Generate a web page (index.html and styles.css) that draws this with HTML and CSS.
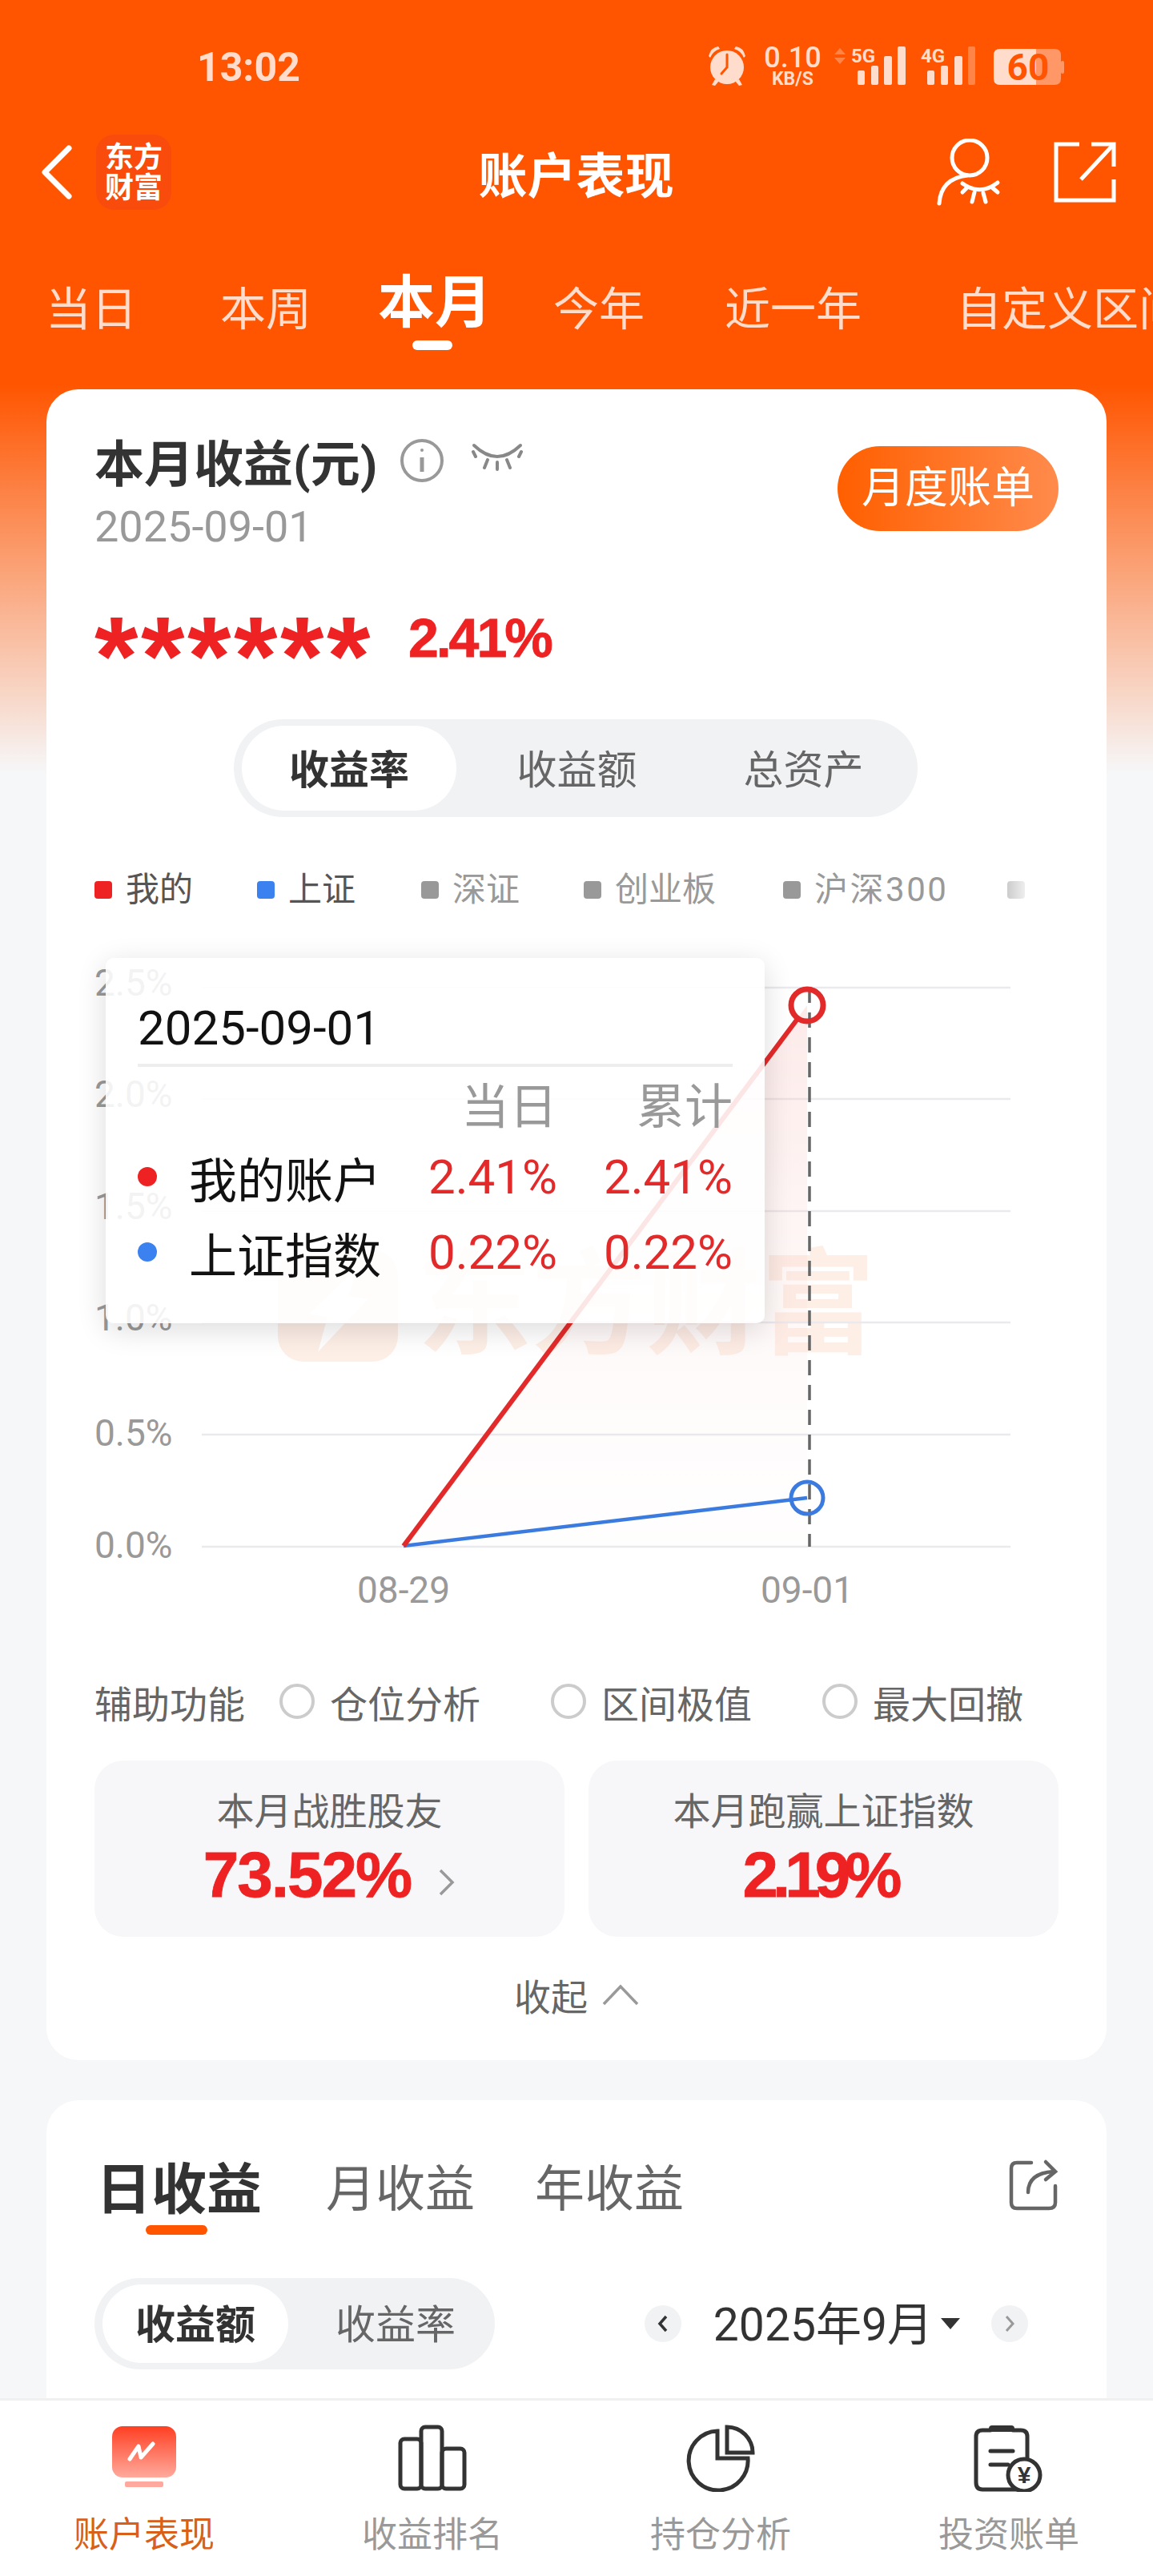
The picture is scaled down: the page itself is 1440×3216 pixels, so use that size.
FILE: index.html
```html
<!DOCTYPE html>
<html lang="zh-CN">
<head>
  <meta charset="UTF-8">
  <title>账户表现</title>
  <link rel="stylesheet" href="styles.css">
</head>
<body>
  <div class="phone">
    <div class="status-bar">
      <span class="clock">13:02</span>
      <svg class="status-icons" viewBox="880 50 460 64" width="460" height="64">
        <g fill="#ffdccb">
          <circle cx="908" cy="84" r="21"/>
          <path d="M885 70 Q888 59 897 58 L899 61 Q890 64 887 72Z M931 70 Q928 59 919 58 L917 61 Q926 64 929 72Z"/>
          <path d="M893 99 L889 106 L893 107 L898 101Z M923 99 L927 106 L923 107 L918 101Z"/>
          <text class="sb-num" x="990" y="84" text-anchor="middle">0.10</text>
          <text class="sb-unit" x="990" y="106" text-anchor="middle">KB/S</text>
          <text class="sb-net" x="1063" y="78">5G</text>
          <rect x="1071" y="88" width="9" height="18" rx="2"/>
          <rect x="1088" y="82" width="9" height="24" rx="2"/>
          <rect x="1104" y="70" width="10" height="36" rx="2"/>
          <rect x="1121" y="58" width="10" height="48" rx="2"/>
          <text class="sb-net" x="1150" y="78">4G</text>
          <rect x="1158" y="88" width="9" height="18" rx="2"/>
          <rect x="1175" y="82" width="9" height="24" rx="2"/>
          <rect x="1192" y="70" width="10" height="36" rx="2"/>
          <rect x="1209" y="58" width="9" height="48" rx="2" opacity=".35"/>
          <path d="M1049 60 L1056 68 H1042Z M1049 80 L1056 72 H1042Z" opacity=".35"/>
          <path d="M1249 61 H1294 V106 H1249 Q1241 106 1241 98 V69 Q1241 61 1249 61Z"/>
          <path d="M1294 61 H1317 Q1325 61 1325 69 V98 Q1325 106 1317 106 H1294Z" opacity=".5"/>
          <rect x="1325" y="76" width="4" height="16" rx="2" opacity=".5"/>
        </g>
        <path d="M908 68 V84 L901 92" fill="none" stroke="#ff5500" stroke-width="3" stroke-linecap="round"/>
        <text class="sb-batt" x="1284" y="100" text-anchor="middle">60</text>
      </svg>
    </div>

    <header class="topbar">
      <div class="topbar-left">
        <svg width="42" height="70" viewBox="0 0 42 70">
          <path d="M36 5 L6 35 L36 65" fill="none" stroke="#fff" stroke-width="7" stroke-linecap="round" stroke-linejoin="round"/>
        </svg>
        <div class="app-logo">东方<br>财富</div>
      </div>
      <h1 class="page-title">账户表现</h1>
      <div class="topbar-right">
        <svg width="80" height="84" viewBox="0 0 80 84" fill="none" stroke="#fff" stroke-width="5" stroke-linecap="round">
          <circle cx="41" cy="24" r="22"/>
          <path d="M3 81 Q5 50 38 46"/>
          <path d="M32 56 Q54 72 76 55"/>
          <path d="M38 61 L32 67 M47 67 L44 79 M58 68 L61 79 M69 61 L76 67"/>
        </svg>
        <svg width="78" height="78" viewBox="0 0 78 78" fill="none" stroke="#fff" stroke-width="5">
          <path d="M32 4 H3 V74 H75 V48"/>
          <path d="M47 4 H75 V32"/>
          <path d="M75 4 L34 48"/>
        </svg>
      </div>
    </header>

    <nav class="period-tabs">
      <span class="period-tab">当日</span>
      <span class="period-tab">本周</span>
      <span class="period-tab is-active">本月</span>
      <span class="period-tab">今年</span>
      <span class="period-tab">近一年</span>
      <span class="period-tab">自定义区间</span>
    </nav>

    <main class="content">
      <section class="card summary-card">
        <div class="summary-head">
          <div>
            <div class="summary-title">
              <span>本月收益(元)</span>
              <svg class="info-icon" width="56" height="56" viewBox="0 0 56 56" fill="none" stroke="#999" stroke-width="4">
                <circle cx="28" cy="28" r="25"/>
                <path d="M28 24 V42" stroke-width="5"/>
                <circle cx="28" cy="15" r="2" fill="#999" stroke="none"/>
              </svg>
              <svg class="eye-icon" width="64" height="40" viewBox="0 0 64 40" fill="none" stroke="#888" stroke-width="4" stroke-linecap="round">
                <path d="M3 6 Q32 34 61 6"/>
                <path d="M5 20 L2 14 M20 24 L16 34 M44 24 L48 34 M59 20 L62 14 M32 27 V36"/>
              </svg>
            </div>
            <div class="summary-date">2025-09-01</div>
          </div>
          <div class="bill-btn">月度账单</div>
        </div>

        <div class="amount-row">
          <span class="amount-mask">******</span>
          <span class="amount-rate">2.41%</span>
        </div>

        <div class="segment segment-wide">
          <span class="segment-item is-active">收益率</span>
          <span class="segment-item">收益额</span>
          <span class="segment-item">总资产</span>
        </div>

        <div class="legend">
          <span class="legend-item"><i class="sq red"></i>我的</span>
          <span class="legend-item"><i class="sq blue"></i>上证</span>
          <span class="legend-item muted"><i class="sq"></i>深证</span>
          <span class="legend-item muted"><i class="sq"></i>创业板</span>
          <span class="legend-item muted"><i class="sq"></i>沪深300</span>
          <span class="legend-item muted"><i class="sq fade"></i></span>
        </div>

        <div class="chart">
          <div class="watermark">
            <svg width="150" height="140" viewBox="0 0 150 140">
              <rect width="150" height="140" rx="32" fill="#fdeee6"/>
              <path d="M100 22 L40 80 L62 84 L50 128 L112 62 L88 58Z" fill="#fff"/>
            </svg>
            <span>东方财富</span>
          </div>
          <svg class="chart-svg" viewBox="118 1170 1204 860" width="1204" height="860">
            <defs>
              <linearGradient id="areaFill" x1="0" y1="0" x2="0" y2="1">
                <stop offset="0" stop-color="#f6b9b4" stop-opacity=".3"/>
                <stop offset="1" stop-color="#fde9e6" stop-opacity=".04"/>
              </linearGradient>
            </defs>
            <g stroke="#e9e9ee" stroke-width="2.5">
              <path d="M252 1233 H1262"/>
              <path d="M252 1372 H1262"/>
              <path d="M252 1512 H1262"/>
              <path d="M252 1651 H1262"/>
              <path d="M252 1791 H1262"/>
              <path d="M252 1931 H1262"/>
            </g>
            <g class="axis-label">
              <text x="118" y="1243">2.5%</text>
              <text x="118" y="1382">2.0%</text>
              <text x="118" y="1522">1.5%</text>
              <text x="118" y="1661">1.0%</text>
              <text x="118" y="1805">0.5%</text>
              <text x="118" y="1945">0.0%</text>
              <text x="504" y="2001" text-anchor="middle">08-29</text>
              <text x="1008" y="2001" text-anchor="middle">09-01</text>
            </g>
            <path d="M504 1930 L1008 1255 V1930Z" fill="url(#areaFill)"/>
            <path d="M1011 1233 V1931" stroke="#666" stroke-width="3.5" stroke-dasharray="19 12"/>
            <path d="M504 1930 L1008 1870" stroke="#3b7be0" stroke-width="4.5" fill="none"/>
            <path d="M504 1930 L996 1272" stroke="#e32a2a" stroke-width="6" fill="none"/>
            <circle cx="1008" cy="1255" r="20" fill="none" stroke="#e32a2a" stroke-width="7"/>
            <circle cx="1008" cy="1870" r="20" fill="none" stroke="#3b7be0" stroke-width="5"/>
          </svg>
          <div class="chart-tip">
            <div class="tip-date">2025-09-01</div>
            <div class="tip-row tip-head">
              <span class="tip-name"></span><span class="tip-val">当日</span><span class="tip-val">累计</span>
            </div>
            <div class="tip-row">
              <i class="dot red"></i><span class="tip-name">我的账户</span><span class="tip-val up">2.41%</span><span class="tip-val up">2.41%</span>
            </div>
            <div class="tip-row">
              <i class="dot blue"></i><span class="tip-name">上证指数</span><span class="tip-val up">0.22%</span><span class="tip-val up">0.22%</span>
            </div>
          </div>
        </div>

        <div class="assist-row">
          <span class="assist-label">辅助功能</span>
          <span class="radio"><i></i>仓位分析</span>
          <span class="radio"><i></i>区间极值</span>
          <span class="radio"><i></i>最大回撤</span>
        </div>

        <div class="stats">
          <div class="stat-box">
            <div class="stat-label">本月战胜股友</div>
            <div class="stat-value">73.52%
              <svg class="stat-arrow" width="22" height="36" viewBox="0 0 22 36" fill="none" stroke="#999" stroke-width="3.5">
                <path d="M3 3 L18 18 L3 33"/>
              </svg>
            </div>
          </div>
          <div class="stat-box">
            <div class="stat-label">本月跑赢上证指数</div>
            <div class="stat-value tight">2.19%</div>
          </div>
        </div>

        <div class="collapse-row">
          <span>收起</span>
          <svg width="46" height="28" viewBox="0 0 46 28" fill="none" stroke="#999" stroke-width="3.5">
            <path d="M2 26 L23 4 L44 26"/>
          </svg>
        </div>
      </section>

      <section class="card income-card">
        <div class="income-head">
          <span class="income-tab is-active">日收益</span>
          <span class="income-tab">月收益</span>
          <span class="income-tab">年收益</span>
          <svg class="income-share" width="62" height="66" viewBox="0 0 62 66" fill="none" stroke="#666" stroke-width="4.5" stroke-linecap="round">
            <path d="M28 5 H10 Q3 5 3 12 V55 Q3 62 10 62 H50 Q58 62 58 55 V34"/>
            <path d="M24 42 Q24 18 56 16"/>
            <path d="M46 4 L58 16 L46 26"/>
          </svg>
        </div>
        <div class="income-tools">
          <div class="segment segment-small">
            <span class="segment-item is-active">收益额</span>
            <span class="segment-item">收益率</span>
          </div>
          <div class="month-picker">
            <span class="month-nav">
              <svg width="14" height="24" viewBox="0 0 14 24" fill="none" stroke="#333" stroke-width="3.5"><path d="M11 3 L3 12 L11 21"/></svg>
            </span>
            <span class="month-text">2025年9月</span>
            <i class="caret"></i>
            <span class="month-nav">
              <svg width="14" height="24" viewBox="0 0 14 24" fill="none" stroke="#999" stroke-width="3"><path d="M3 3 L11 12 L3 21"/></svg>
            </span>
          </div>
        </div>
      </section>
    </main>

    <footer class="bottom-nav">
      <div class="nav-item is-active">
        <svg width="90" height="84" viewBox="0 0 90 84">
          <defs>
            <linearGradient id="navFill" x1="0" y1="0" x2="0" y2="1">
              <stop offset="0" stop-color="#ff3f22"/>
              <stop offset="1" stop-color="#ffaa9c"/>
            </linearGradient>
          </defs>
          <rect x="5" y="2" width="80" height="64" rx="13" fill="url(#navFill)"/>
          <rect x="21" y="71" width="48" height="7" rx="2" fill="#ffa99e"/>
          <path d="M27 43 L38 27 L41 41 L56 24" fill="none" stroke="#fff" stroke-width="5" stroke-linecap="round" stroke-linejoin="round"/>
        </svg>
        <span>账户表现</span>
      </div>
      <div class="nav-item">
        <svg width="90" height="84" viewBox="0 0 90 84" fill="none" stroke="#333" stroke-width="5" stroke-linejoin="round">
          <rect x="5" y="18" width="26" height="62" rx="5"/>
          <rect x="31" y="3" width="26" height="77" rx="5"/>
          <rect x="57" y="30" width="28" height="50" rx="5"/>
        </svg>
        <span>收益排名</span>
      </div>
      <div class="nav-item">
        <svg width="90" height="84" viewBox="0 0 90 84" fill="none" stroke="#333" stroke-width="5">
          <path d="M41 8 A37 37 0 1 0 79 42 H41Z"/>
          <path d="M53 3 A32 32 0 0 1 85 35 H53Z"/>
        </svg>
        <span>持仓分析</span>
      </div>
      <div class="nav-item">
        <svg width="90" height="84" viewBox="0 0 90 84" fill="none" stroke="#333" stroke-width="5" stroke-linecap="round">
          <path d="M22 7 H12 Q4 7 4 15 V72 Q4 81 12 81 H62"/>
          <path d="M50 7 H60 Q68 7 68 15 V42"/>
          <path d="M24 5 H48" stroke-width="8"/>
          <path d="M22 33 H50 M22 50 H44"/>
          <circle cx="64" cy="63" r="20" fill="#fff"/>
          <text class="nav-yen" x="64" y="73" text-anchor="middle">¥</text>
        </svg>
        <span>投资账单</span>
      </div>
    </footer>
  </div>
</body>
</html>
```

FILE: styles.css
```css
* {
  box-sizing: border-box;
}

html,
body {
  margin: 0;
  padding: 0;
}

body {
  font-family: Roboto, "Noto Sans CJK SC", sans-serif;
  color: #333;
}

.phone {
  display: flex;
  flex-direction: column;
  width: 1440px;
  height: 3216px;
  overflow: hidden;
  background: linear-gradient(#ff5500 480px, #f6f7f9 965px);
}

/* status bar */
.status-bar {
  display: flex;
  justify-content: space-between;
  align-items: flex-start;
  flex: none;
  height: 130px;
  padding: 50px 100px 0 246px;
}

.clock {
  margin-top: 4px;
  font-size: 50px;
  line-height: 60px;
  font-weight: 700;
  color: #ffdccb;
}

.sb-num {
  font: 500 36px Roboto, sans-serif;
}

.sb-unit {
  font: 700 23px Roboto, sans-serif;
}

.sb-net {
  font: 700 24px Roboto, sans-serif;
}

.sb-batt {
  font: 700 46px Roboto, sans-serif;
  fill: #ff5500;
}

/* title bar */
.topbar {
  display: grid;
  grid-template-columns: 1fr auto 1fr;
  align-items: center;
  flex: none;
  height: 170px;
  padding: 0 46px 0 50px;
}

.topbar-left {
  display: flex;
  align-items: center;
  gap: 28px;
}

.app-logo {
  width: 94px;
  height: 94px;
  padding-top: 10px;
  border-radius: 22px;
  background: #f94c0c;
  color: #fff;
  font-size: 36px;
  line-height: 38px;
  font-weight: 700;
  text-align: center;
}

.page-title {
  margin: 0 0 0 -5px;
  font-size: 61px;
  font-weight: 700;
  color: #fff;
}

.topbar-right {
  display: flex;
  justify-content: flex-end;
  align-items: center;
  gap: 66px;
}

/* period tabs */
.period-tabs {
  display: flex;
  align-items: center;
  flex: none;
  height: 186px;
  padding: 0 0 24px 57px;
  overflow: hidden;
  white-space: nowrap;
}

.period-tab {
  position: relative;
  flex: none;
  margin-right: 83px;
  font-size: 57px;
  color: #ffdccb;
}

.period-tab:nth-child(1) {
  margin-right: 104px;
}

.period-tab:nth-child(3) {
  margin-right: 77px;
}

.period-tab:nth-child(4) {
  margin-right: 100px;
}

.period-tab:nth-child(5) {
  margin-right: 118px;
}

.period-tab.is-active {
  margin-bottom: 6px;
  font-size: 71px;
  line-height: 84px;
  font-weight: 700;
  color: #fff;
}

.period-tab.is-active::after {
  content: "";
  position: absolute;
  left: 43px;
  bottom: -17px;
  width: 50px;
  height: 12px;
  border-radius: 6px;
  background: #fff;
}

/* page body */
.content {
  flex: 1;
  min-height: 0;
  overflow: hidden;
  padding: 0 58px;
}

.card {
  border-radius: 40px;
  background: #fff;
}

.summary-card {
  padding: 60px 60px 52px;
}

.summary-head {
  display: flex;
  justify-content: space-between;
  align-items: flex-start;
}

.summary-title {
  display: flex;
  align-items: center;
  height: 70px;
  margin-top: -6px;
  font-size: 62px;
  font-weight: 700;
}

.info-icon {
  margin-left: 28px;
}

.eye-icon {
  margin: -10px 0 0 34px;
}

.summary-date {
  margin-top: 18px;
  font-size: 54px;
  line-height: 60px;
  color: #999;
}

.bill-btn {
  width: 276px;
  height: 106px;
  margin-top: 11px;
  border-radius: 53px;
  background: linear-gradient(90deg, #ff5f00, #ff8b4c);
  color: #fff;
  font-size: 54px;
  line-height: 106px;
  text-align: center;
}

.amount-row {
  display: flex;
  align-items: flex-start;
  height: 90px;
  margin-top: 62px;
  color: #ee2222;
}

.amount-mask {
  margin-top: -4px;
  font: 700 140px/146px "Liberation Sans", sans-serif;
  letter-spacing: 3.5px;
}

.amount-rate {
  margin: 8px 0 0 44px;
  font: 700 68px/76px "Liberation Sans", sans-serif;
  letter-spacing: -3px;
  -webkit-text-stroke: 0.8px #ee2222;
}

.segment {
  display: flex;
  padding: 8px 10px;
  background: #f1f2f4;
}

.segment-item {
  flex: 1;
  text-align: center;
  color: #666;
}

.segment-item.is-active {
  flex: none;
  background: #fff;
  color: #333;
  font-weight: 700;
}

.segment-wide {
  width: 854px;
  height: 122px;
  margin: 58px 0 0 174px;
  border-radius: 61px;
}

.segment-wide .segment-item {
  padding-left: 18px;
  font-size: 50px;
  line-height: 112px;
  border-radius: 53px;
}

.segment-wide .segment-item.is-active {
  width: 268px;
  padding-left: 0;
}

.legend {
  display: flex;
  height: 44px;
  margin-top: 69px;
  white-space: nowrap;
}

.legend-item {
  display: flex;
  align-items: center;
  flex: none;
  margin-right: 80px;
  font-size: 42px;
  line-height: 44px;
  color: #555;
}

.legend-item:nth-child(2) {
  margin-right: 82px;
}

.legend-item:nth-child(4) {
  margin-right: 84px;
}

.legend-item:nth-child(5) {
  margin-right: 74px;
  letter-spacing: 2.5px;
}

.legend-item.muted {
  color: #999;
}

.sq {
  flex: none;
  width: 22px;
  height: 22px;
  margin-right: 17px;
  border-radius: 4px;
  background: #999;
}

.sq.red,
.dot.red {
  background: #ee2222;
}

.sq.blue,
.dot.blue {
  background: #3b82f0;
}

.sq.fade {
  background: linear-gradient(90deg, #ccc, #eee);
}

/* chart */
.chart {
  position: relative;
  height: 860px;
  margin-top: 37px;
}

.chart-svg {
  position: absolute;
  left: 0;
  top: 0;
}

.axis-label text {
  font: 46px Roboto, sans-serif;
  fill: #999;
}

.watermark {
  position: absolute;
  left: 229px;
  top: 390px;
  display: flex;
  align-items: center;
  gap: 24px;
  font-size: 143px;
  line-height: 140px;
  font-weight: 700;
  color: #fdeee6;
  white-space: nowrap;
}

.chart-tip {
  position: absolute;
  left: 14px;
  top: 26px;
  width: 823px;
  height: 456px;
  padding: 50px 40px 0;
  border-radius: 10px;
  background: rgba(255, 255, 255, 0.88);
  box-shadow: 0 8px 36px rgba(0, 0, 0, 0.14);
}

.tip-date {
  height: 86px;
  border-bottom: 4px solid #eee;
  font-size: 60px;
  line-height: 76px;
  color: #111;
}

.tip-row {
  display: flex;
  align-items: center;
  height: 94px;
  font-size: 60px;
}

.tip-head {
  height: 88px;
  margin-bottom: 2px;
  color: #999;
}

.tip-name {
  flex: 1;
  min-width: 0;
  font-size: 60px;
  color: #111;
  white-space: nowrap;
}

.tip-val {
  flex: none;
  width: 219px;
  text-align: right;
}

.tip-val.up {
  color: #e32a2a;
}

.dot {
  flex: none;
  width: 24px;
  height: 24px;
  margin-right: 40px;
  border-radius: 50%;
}

/* assist options */
.assist-row {
  display: flex;
  align-items: center;
  height: 60px;
  margin-top: 64px;
  font-size: 47px;
  color: #666;
}

.assist-label {
  flex: none;
  width: 231px;
}

.radio {
  display: flex;
  align-items: center;
  flex: none;
  width: 339px;
}

.radio i {
  flex: none;
  width: 44px;
  height: 44px;
  margin-right: 19px;
  border: 4px solid #ccc;
  border-radius: 50%;
}

.stats {
  display: grid;
  grid-template-columns: 1fr 1fr;
  gap: 30px;
  margin-top: 44px;
}

.stat-box {
  height: 220px;
  padding-top: 36px;
  border-radius: 36px;
  background: #f7f7fa;
  text-align: center;
}

.stat-label {
  font-size: 47px;
  line-height: 56px;
  color: #666;
}

.stat-value {
  margin-top: 6px;
  font: 700 80px/90px "Liberation Sans", sans-serif;
  letter-spacing: -2px;
  color: #ee2222;
  -webkit-text-stroke: 0.8px #ee2222;
}

.stat-value.tight {
  padding-right: 10px;
  letter-spacing: -7px;
}

.stat-arrow {
  margin-left: 14px;
}

.collapse-row {
  display: flex;
  justify-content: center;
  align-items: center;
  gap: 18px;
  height: 60px;
  margin-top: 42px;
  font-size: 46px;
  color: #666;
}

/* income card */
.income-card {
  margin-top: 50px;
  padding: 61px 60px 80px 62px;
}

.income-head {
  display: flex;
  align-items: center;
  height: 90px;
  gap: 80px;
}

.income-tab {
  position: relative;
  font-size: 62px;
  color: #666;
}

.income-tab:nth-child(2) {
  margin-right: -5px;
}

.income-tab.is-active {
  font-size: 69px;
  font-weight: 700;
  color: #333;
}

.income-tab.is-active::after {
  content: "";
  position: absolute;
  left: 62px;
  bottom: -12px;
  width: 77px;
  height: 12px;
  border-radius: 6px;
  background: #ff5500;
}

.income-share {
  margin-left: auto;
}

.income-tools {
  display: flex;
  justify-content: space-between;
  align-items: center;
  margin: 71px 0 0 -2px;
}

.segment-small {
  width: 500px;
  height: 114px;
  border-radius: 57px;
}

.segment-small .segment-item {
  padding-left: 20px;
  font-size: 50px;
  line-height: 102px;
  border-radius: 49px;
}

.segment-small .segment-item.is-active {
  width: 232px;
  padding-left: 0;
}

.month-picker {
  display: flex;
  align-items: center;
  margin-right: 38px;
}

.month-nav {
  display: flex;
  justify-content: center;
  align-items: center;
  width: 46px;
  height: 46px;
  border-radius: 50%;
  background: #f1f2f4;
}

.month-text {
  margin: 4px 0 0 40px;
  font-size: 57px;
  line-height: 70px;
}

.caret {
  width: 0;
  height: 0;
  margin: 0 39px 0 10px;
  border-top: 14px solid #333;
  border-left: 12px solid transparent;
  border-right: 12px solid transparent;
}

/* bottom nav */
.bottom-nav {
  display: grid;
  grid-template-columns: repeat(4, 360px);
  flex: none;
  height: 222px;
  border-top: 3px solid #f0f0f0;
  background: #fff;
}

.nav-item {
  display: flex;
  flex-direction: column;
  align-items: center;
  padding-top: 30px;
  font-size: 44px;
  line-height: 56px;
  color: #999;
}

.nav-item span {
  margin-top: 26px;
}

.nav-item.is-active {
  color: #d9601a;
}

.nav-yen {
  font: 700 30px "Liberation Sans", sans-serif;
  fill: #333;
  stroke: none;
}
```
